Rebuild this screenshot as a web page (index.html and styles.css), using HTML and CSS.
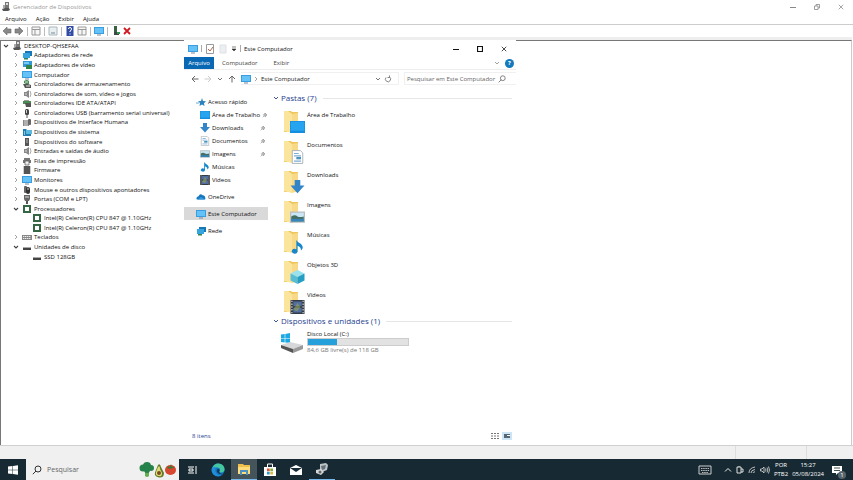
FILE: index.html
```html
<!DOCTYPE html>
<html lang="pt-BR">
<head>
<meta charset="utf-8">
<title>Gerenciador de Dispositivos</title>
<link rel="stylesheet" href="styles.css">
</head>
<body>
<svg class="defs" aria-hidden="true">
  <symbol id="chev" viewBox="0 0 8 8"><path d="M3 2 5 4 3 6" fill="none" stroke="#999" stroke-width=".9"/></symbol>
  <symbol id="open" viewBox="0 0 8 8"><path d="M2 3l2 2 2-2" fill="none" stroke="#444" stroke-width="1.100"/></symbol>
  <symbol id="pcdev" viewBox="0 0 10 10"><path d="M4 0h4v6H4z" fill="#777"/><path d="M5 1h2v2H5z" fill="#ddd"/><path d="m1 7 3-1h4l1 2-2 1H2z" fill="#555"/><path d="M2 3h2v3H2z" fill="#aaa"/></symbol>
  <symbol id="net" viewBox="0 0 10 10"><path d="M3 1h7v5H3z" fill="#1976b5"/><path d="M1 3h7v5H1z" fill="#35a5df"/><path d="M2 8h4v1.500H2z" fill="#387e55"/></symbol>
  <symbol id="video" viewBox="0 0 10 10"><path d="M1 1h9v6H1z" fill="#3197d5"/><path d="M4 5h6v4H4z" fill="#338447"/><path d="M2 2h5v2H2z" fill="#75cbf2"/></symbol>
  <symbol id="mon" viewBox="0 0 10 10"><path d="M0 1h10v7H0z" fill="#3a9de0"/><path d="M1 2h8v5H1z" fill="#65c2f7"/><path d="M3 9h4" stroke="#789" stroke-width="1"/></symbol>
  <symbol id="stor" viewBox="0 0 10 10"><path d="M2 2q3-2 5 0v3H4l-2-1z" fill="#478d54"/><path d="M1 5h5l3 1v3H3z" fill="#555"/><path d="M3 3h3M4 7h4" stroke="#ddd"/></symbol>
  <symbol id="snd" viewBox="0 0 10 10"><path d="M2 3h2l3-2v8L4 7H2z" fill="#888"/><path d="M8 2q2 3 0 6" fill="none" stroke="#aaa"/><path d="M4 4v2" stroke="#ddd"/></symbol>
  <symbol id="ide" viewBox="0 0 10 10"><path d="M1 3h8v3H1z" fill="#4b8c55"/><path d="M3 5h6v4H4z" fill="#555"/><path d="M2 2h5v1H2z" fill="#999"/></symbol>
  <symbol id="usb" viewBox="0 0 10 10"><rect x="3" y="1" width="4" height="6" rx="1.500" fill="#444"/><path d="M5 6v4" stroke="#555"/><path d="M4 2h1v3H4z" fill="#ccc"/></symbol>
  <symbol id="hid" viewBox="0 0 10 10"><path d="M1 3h6v6H1z" fill="#888"/><path d="M2 4h4M2 6h4M2 8h4" stroke="#eee" stroke-width=".8"/><rect x="6" y="2" width="3" height="6" rx="1" fill="#666"/></symbol>
  <symbol id="sys" viewBox="0 0 10 10"><path d="M1 2h3l1 1h4v6H1z" fill="#247daf"/><path d="M4 3h6v4H4z" fill="#59b9df"/><path d="M2 4h1v4H2z" fill="#7dc8ed"/></symbol>
  <symbol id="soft" viewBox="0 0 10 10"><rect x="3" y="1" width="4" height="8" fill="#555"/><path d="M4 3h2M4 5h2" stroke="#ccc" stroke-width=".8"/></symbol>
  <symbol id="prn" viewBox="0 0 10 10"><path d="M2 2h6v2H2zM1 4h8v3H1z" fill="#777"/><path d="M3 5h4v4H3z" fill="#eee" stroke="#555" stroke-width=".7"/></symbol>
  <symbol id="firm" viewBox="0 0 10 10"><path d="M2 1h6v8H2z" fill="#444"/><path d="M1 2h8M1 4h8M1 6h8M1 8h8" stroke="#777" stroke-width=".7"/></symbol>
  <symbol id="mouse" viewBox="0 0 10 10"><rect x="2" y="1" width="3" height="7" rx="1" fill="#666"/><rect x="4" y="2" width="4" height="7" rx="2" fill="#333"/><path d="M6 3v2" stroke="#ccc"/></symbol>
  <symbol id="port" viewBox="0 0 10 10"><path d="M2 1h6v4L7 7H3L2 5z" fill="#666"/><path d="M3 3h4" stroke="#ddd"/><path d="M5 7v3" stroke="#555" stroke-width="2"/></symbol>
  <symbol id="cpu" viewBox="0 0 10 10"><path d="M1 1h8v8H1z" fill="#356744"/><path d="M3 3h4v4H3z" fill="#fff"/></symbol>
  <symbol id="kbd" viewBox="0 0 10 10"><path d="M0 3h10v5H0z" fill="#888"/><path d="M1 4.500h8M1 6.500h8" stroke="#eee" stroke-dasharray="1.400 .6"/></symbol>
  <symbol id="disk" viewBox="0 0 10 10"><path d="M2 5h6l1 1v2H1V6z" fill="#444"/><path d="M2 5h6l1 1H1z" fill="#aaa"/></symbol>
  <symbol id="pin" viewBox="0 0 6 6"><path d="m3 1 2 2-1 .4L3.500 5 1.400 2.800 2.700 2zM2 4 .7 5.300" fill="#bbb" stroke="#8a8a8a" stroke-width=".6"/></symbol>
  <symbol id="star" viewBox="0 0 10 10"><path d="m6 1 1 3 3 .2-2 2L8.500 9 6 7.500 3.500 9 4 6 2 4.200 5 4z" fill="#2d82bd"/><path d="M0 6h3" stroke="#61acd7"/></symbol>
  <symbol id="desk" viewBox="0 0 10 8"><path d="M0 0h10v8H0z" fill="#168ee0"/><path d="M.5.500h9v6h-9z" fill="#27a4ef"/></symbol>
  <symbol id="down" viewBox="0 0 10 10"><path d="M3 0h4v4h3L5 9.500 0 4h3z" fill="#3285c8"/></symbol>
  <symbol id="doc" viewBox="0 0 10 12"><path d="M.5.500h7l2 2v9h-9z" fill="#fff" stroke="#a8b0b5" stroke-width=".8"/><path d="M2 3h4M2 5h6M2 9.500h6" stroke="#7eaed2"/><path d="M4 6h4v2H4z" fill="#4c92bf"/></symbol>
  <symbol id="pic" viewBox="0 0 12 9"><path d="M.5.500h11v8H.5z" fill="#c8e6f5" stroke="#b9bec2"/><path d="M1 4q3-2 5 0 2 1 5 0v4H1z" fill="#456f63"/><path d="M1 6h10v2H1z" fill="#3585bc"/></symbol>
  <symbol id="note" viewBox="0 0 10 12"><path d="M4 0q1 2 4 3.500 3 3 0 5.500 0-3-3-4v5a2.500 2 0 1 1-1-2z" fill="#1687ce"/></symbol>
  <symbol id="film" viewBox="0 0 10 10"><path d="M0 0h10v10H0z" fill="#333b45"/><path d="M2 1h6v3.500H2zM2 5.500h6V9H2z" fill="#526ea0"/><path d="M2 7 5 2l2 3-2 3z" fill="#96a650" opacity=".6"/><path d="M1 .5v9M9 .5v9" stroke="#ddd" stroke-width=".8" stroke-dasharray="1"/></symbol>
  <symbol id="cloud" viewBox="0 0 12 8"><path d="M1 7Q-.5 4 3 3q2-4 5-1 3 0 3 3 1 2-1 2z" fill="#1677bf"/><path d="M2 7 6 4l5 3z" fill="#359be0"/></symbol>
  <symbol id="cube" viewBox="0 0 12 12"><path d="m6 0 6 3-6 3-6-3z" fill="#99e2ee"/><path d="m0 3 6 3v6L0 9z" fill="#57bdd6"/><path d="m12 3-6 3v6l6-3z" fill="#259ec3"/></symbol>
  <symbol id="folder" viewBox="0 0 22 24"><path d="M1 1h7l1 1h6v20H1z" fill="#eec65d"/><path d="M1 1h4l4 3v19l-8-2z" fill="#fbe49b"/><path d="m9 4 6-1v18l-6 2z" fill="#f8d987"/></symbol>
  <symbol id="search" viewBox="0 0 10 10"><circle cx="6" cy="4" r="3" fill="none" stroke="currentColor"/><path d="M4 6 .8 9.200" stroke="currentColor"/></symbol>
  <symbol id="arrow" viewBox="0 0 8 8"><path d="M7.500 4H1M4 1 1 4l3 3" fill="none" stroke="currentColor"/></symbol>
  <symbol id="down-s" viewBox="0 0 6 6"><path d="m1 2 2 2 2-2" fill="none" stroke="currentColor" stroke-width=".9"/></symbol>
  <symbol id="x" viewBox="0 0 8 8"><path d="m1 1 6 6M7 1 1 7" stroke="currentColor"/></symbol>
</svg>
<div class="screen">
  <main class="manager">
    <header class="titlebar">
      <svg class="i10"><use href="#pcdev"/></svg><h1>Gerenciador de Dispositivos</h1>
      <div class="controls">
        <button aria-label="Minimizar"><svg class="i6" viewBox="0 0 6 6"><path d="M0 3.500h6" stroke="currentColor"/></svg></button>
        <button aria-label="Restaurar"><svg class="i6" viewBox="0 0 6 6"><path d="M.5 2h3.500v3.500H.5zM2 2V.5h3.500V4H4" fill="none" stroke="currentColor" stroke-width=".8"/></svg></button>
        <button aria-label="Fechar"><svg class="i6"><use href="#x"/></svg></button>
      </div>
    </header>
    <nav class="menu"><button>Arquivo</button><button>Ação</button><button>Exibir</button><button>Ajuda</button></nav>
    <div class="tools">
      <button aria-label="Voltar"><svg class="i10" viewBox="0 0 10 10"><path d="M1 5 5 1v2h4v4H5v2z" fill="#888" stroke="#666" stroke-width=".6"/></svg></button>
      <button aria-label="Avançar"><svg class="i10" viewBox="0 0 10 10"><path d="M9 5 5 1v2H1v4h4v2z" fill="#888" stroke="#666" stroke-width=".6"/></svg></button>
      <i></i>
      <button aria-label="Árvore"><svg class="i10" viewBox="0 0 10 10"><path d="M1 1h8v8H1zM4 4v5M1 3.500h8" fill="#f6f6f6" stroke="#999"/></svg></button>
      <i></i>
      <button aria-label="Propriedades"><svg class="i10" viewBox="0 0 10 10"><path d="M1 1h8v8H1z" fill="#e9eef1" stroke="#a9b8c0"/><path d="M3 7h4" stroke="#789"/></svg></button>
      <i></i>
      <button aria-label="Ajuda"><svg class="i10" viewBox="0 0 10 10"><path d="M1.500 0h7v10h-7z" fill="#2f4ba4"/><path d="M3.500 3q0-1.500 1.500-1.500T6.500 3 5 5v1M5 7.500v1" fill="none" stroke="#fff"/></svg></button>
      <button aria-label="Ações"><svg class="i10" viewBox="0 0 10 10"><path d="M1 1h8v8H1zM5 4v5M1 3.500h8" fill="#f6f6f6" stroke="#999"/></svg></button>
      <i></i>
      <button aria-label="Examinar"><svg class="i10"><use href="#mon"/></svg></button>
      <i></i>
      <button aria-label="Habilitar"><svg class="i10" viewBox="0 0 10 10"><path d="M3 0h3v6H3z" fill="#386044"/><path d="M3 6h5v3H3z" fill="#444"/><path d="M6 6h3v2H6z" fill="#2c9553"/></svg></button>
      <button aria-label="Desinstalar" class="remove"><svg class="i8" viewBox="0 0 8 8"><path d="m1 1 6 6M7 1 1 7" stroke="currentColor" stroke-width="1.800"/></svg></button>
    </div>
    <section class="pane" aria-label="Dispositivos">
      <ul class="tree">
        <li class="root"><svg class="i8"><use href="#open"/></svg><svg class="i10"><use href="#pcdev"/></svg>DESKTOP-QHSEFAA</li>
        <li><svg class="i8"><use href="#chev"/></svg><svg class="i10"><use href="#net"/></svg>Adaptadores de rede</li>
        <li><svg class="i8"><use href="#chev"/></svg><svg class="i10"><use href="#video"/></svg>Adaptadores de vídeo</li>
        <li><svg class="i8"><use href="#chev"/></svg><svg class="i10"><use href="#mon"/></svg>Computador</li>
        <li><svg class="i8"><use href="#chev"/></svg><svg class="i10"><use href="#stor"/></svg>Controladores de armazenamento</li>
        <li><svg class="i8"><use href="#chev"/></svg><svg class="i10"><use href="#snd"/></svg>Controladores de som, vídeo e jogos</li>
        <li><svg class="i8"><use href="#chev"/></svg><svg class="i10"><use href="#ide"/></svg>Controladores IDE ATA/ATAPI</li>
        <li><svg class="i8"><use href="#chev"/></svg><svg class="i10"><use href="#usb"/></svg>Controladores USB (barramento serial universal)</li>
        <li><svg class="i8"><use href="#chev"/></svg><svg class="i10"><use href="#hid"/></svg>Dispositivos de Interface Humana</li>
        <li><svg class="i8"><use href="#chev"/></svg><svg class="i10"><use href="#sys"/></svg>Dispositivos de sistema</li>
        <li><svg class="i8"><use href="#chev"/></svg><svg class="i10"><use href="#soft"/></svg>Dispositivos do software</li>
        <li><svg class="i8"><use href="#chev"/></svg><svg class="i10"><use href="#snd"/></svg>Entradas e saídas de áudio</li>
        <li><svg class="i8"><use href="#chev"/></svg><svg class="i10"><use href="#prn"/></svg>Filas de impressão</li>
        <li><svg class="i8"><use href="#chev"/></svg><svg class="i10"><use href="#firm"/></svg>Firmware</li>
        <li><svg class="i8"><use href="#chev"/></svg><svg class="i10"><use href="#mon"/></svg>Monitores</li>
        <li><svg class="i8"><use href="#chev"/></svg><svg class="i10"><use href="#mouse"/></svg>Mouse e outros dispositivos apontadores</li>
        <li><svg class="i8"><use href="#chev"/></svg><svg class="i10"><use href="#port"/></svg>Portas (COM e LPT)</li>
        <li><svg class="i8"><use href="#open"/></svg><svg class="i10"><use href="#cpu"/></svg>Processadores</li>
        <li class="leaf"><svg class="i10"><use href="#cpu"/></svg>Intel(R) Celeron(R) CPU 847 @ 1.10GHz</li>
        <li class="leaf"><svg class="i10"><use href="#cpu"/></svg>Intel(R) Celeron(R) CPU 847 @ 1.10GHz</li>
        <li><svg class="i8"><use href="#chev"/></svg><svg class="i10"><use href="#kbd"/></svg>Teclados</li>
        <li><svg class="i8"><use href="#open"/></svg><svg class="i10"><use href="#disk"/></svg>Unidades de disco</li>
        <li class="leaf"><svg class="i10"><use href="#disk"/></svg>SSD 128GB</li>
      </ul>
    </section>
    <footer class="status"><span></span><span></span></footer>

    <section class="explorer" aria-label="Este Computador">
      <header class="ex-title">
        <svg class="i10"><use href="#mon"/></svg><i></i>
        <svg class="i10" viewBox="0 0 10 10"><path d="M1.500.500h7v9h-7z" fill="#fff" stroke="#999"/><path d="m3 5 2 2 3-4" fill="none" stroke="#b7613e"/></svg>
        <svg class="i10" viewBox="0 0 10 10"><path d="M2 1h6v8H2z" fill="#eceff2" stroke="#dde1e5"/></svg>
        <svg class="i6" viewBox="0 0 6 6"><path d="M1 1h4M1 3h4L3 5z" fill="#333" stroke="#333" stroke-width=".6"/></svg><i></i>
        <h2>Este Computador</h2>
        <div class="ex-controls">
          <button aria-label="Minimizar"><svg class="i6" viewBox="0 0 6 6"><path d="M0 3.500h6" stroke="currentColor"/></svg></button>
          <button aria-label="Maximizar"><svg class="i6" viewBox="0 0 6 6"><path d="M.5.500h5v5h-5z" fill="none" stroke="currentColor" stroke-width="1.200"/></svg></button>
          <button aria-label="Fechar"><svg class="i6"><use href="#x"/></svg></button>
        </div>
      </header>
      <nav class="tabs"><button class="active">Arquivo</button><button>Computador</button><button>Exibir</button>
        <span class="help"><svg class="i6"><use href="#down-s"/></svg><button aria-label="Ajuda">?</button></span></nav>
      <div class="address">
        <button aria-label="Voltar"><svg class="i8"><use href="#arrow"/></svg></button>
        <button aria-label="Avançar" class="off"><svg class="i8 flip"><use href="#arrow"/></svg></button>
        <button aria-label="Recentes"><svg class="i6"><use href="#down-s"/></svg></button>
        <button aria-label="Acima"><svg class="i8 up"><use href="#arrow"/></svg></button>
        <div class="path"><svg class="i10"><use href="#mon"/></svg><svg class="i8"><use href="#chev"/></svg><span>Este Computador</span><svg class="i6 end"><use href="#down-s"/></svg><svg class="i8" viewBox="0 0 8 8"><path d="M2 2.500a2.600 2.600 0 1 0 3.500-.5M5.500.5V2.500h-2" fill="none" stroke="currentColor" stroke-width=".8"/></svg></div>
        <label class="find"><input type="text" placeholder="Pesquisar em Este Computador" aria-label="Pesquisar em Este Computador"><svg class="i8"><use href="#search"/></svg></label>
      </div>
      <div class="ex-body">
        <nav class="side">
          <a href="#" class="quick"><svg class="i10"><use href="#star"/></svg>Acesso rápido</a>
          <a href="#" class="sub"><svg class="i10"><use href="#desk"/></svg>Área de Trabalho<svg class="i6 pin"><use href="#pin"/></svg></a>
          <a href="#" class="sub"><svg class="i10"><use href="#down"/></svg>Downloads<svg class="i6 pin"><use href="#pin"/></svg></a>
          <a href="#" class="sub"><svg class="i10"><use href="#doc"/></svg>Documentos<svg class="i6 pin"><use href="#pin"/></svg></a>
          <a href="#" class="sub"><svg class="i10"><use href="#pic"/></svg>Imagens<svg class="i6 pin"><use href="#pin"/></svg></a>
          <a href="#" class="sub"><svg class="i10"><use href="#note"/></svg>Músicas</a>
          <a href="#" class="sub"><svg class="i10"><use href="#film"/></svg>Vídeos</a>
          <a href="#" class="top"><svg class="i10"><use href="#cloud"/></svg>OneDrive</a>
          <a href="#" class="top sel"><svg class="i10"><use href="#mon"/></svg>Este Computador</a>
          <a href="#" class="top"><svg class="i10"><use href="#net"/></svg>Rede</a>
        </nav>
        <div class="content">
          <h3><svg class="i6"><use href="#down-s"/></svg>Pastas (7)</h3>
          <ul class="folders">
            <li><span class="fold"><svg><use href="#folder"/></svg><svg class="badge"><use href="#desk"/></svg></span>Área de Trabalho</li>
            <li><span class="fold"><svg><use href="#folder"/></svg><svg class="badge"><use href="#doc"/></svg></span>Documentos</li>
            <li><span class="fold"><svg><use href="#folder"/></svg><svg class="badge"><use href="#down"/></svg></span>Downloads</li>
            <li><span class="fold"><svg><use href="#folder"/></svg><svg class="badge"><use href="#pic"/></svg></span>Imagens</li>
            <li><span class="fold"><svg><use href="#folder"/></svg><svg class="badge"><use href="#note"/></svg></span>Músicas</li>
            <li><span class="fold"><svg><use href="#folder"/></svg><svg class="badge"><use href="#cube"/></svg></span>Objetos 3D</li>
            <li><span class="fold"><svg><use href="#folder"/></svg><svg class="badge"><use href="#film"/></svg></span>Vídeos</li>
          </ul>
          <h3><svg class="i6"><use href="#down-s"/></svg>Dispositivos e unidades (1)</h3>
          <div class="drive">
            <svg class="hdd" viewBox="0 0 24 22"><path d="M1 3.500 4.700 3v4H1zM5.300 3 10 2v5H5.300zM1 7.600h3.700v4L1 11zM5.300 7.600H10V12l-4.700-.4z" fill="#1ba9e5"/><path d="m1 14 9-3 13 3-10 4z" fill="#d5d7d8"/><path d="m1 14 12 4v4L1 17z" fill="#555"/><path d="m13 18 10-4v4l-10 4z" fill="#999"/></svg>
            <div class="info"><span>Disco Local (C:)</span><div class="bar"><div></div></div><small>84,6 GB livre(s) de 118 GB</small></div>
          </div>
        </div>
      </div>
      <footer class="ex-foot"><span>8 itens</span>
        <svg class="i10" viewBox="0 0 10 10"><path d="M1 2.500h8M1 5h8M1 7.500h8" stroke="#777" stroke-dasharray="2 1"/></svg>
        <svg class="i10" viewBox="0 0 10 10"><path d="M0 1h10v8H0z" fill="#cde4f5"/><path d="M2 3h6v4H2z" fill="#567"/><path d="M5 4h3v1H5z" fill="#fff"/></svg>
      </footer>
    </section>
  </main>

  <footer class="taskbar">
    <button class="start" aria-label="Iniciar"><svg class="i10" viewBox="0 0 10 10"><path d="M0 1.500 4.500 1v3.700H0zM5 1l5-.8v4.500H5zM0 5.200h4.500V9L0 8.500zM5 5.200h5v4.500L5 9z" fill="#fff"/></svg></button>
    <label class="search"><svg class="i10"><use href="#search"/></svg><input type="text" placeholder="Pesquisar" aria-label="Pesquisar">
      <svg class="food" viewBox="0 0 38 16"><path d="M6 7h4v7q-2 2-4 0z" fill="#66ae53"/><g fill="#27814b"><circle cx="4" cy="6" r="3.500"/><circle cx="8" cy="4" r="4"/><circle cx="12" cy="6" r="3"/><circle cx="8" cy="8" r="3"/></g><path d="M19 3q2-2 3 2l3 6q0 5-5 4.500-5-1-4-5z" fill="#617b28"/><path d="M19 5q2-2 2 2l2 4q0 4-3 3-4 0-3-4z" fill="#e2dc77"/><circle cx="20" cy="11" r="2" fill="#794b23"/><ellipse cx="31.500" cy="8" rx="5.500" ry="5" fill="#d7462f"/><path d="m28 4 3 1 1-3 1 3 3-.5-3 2-4 0z" fill="#377a37"/></svg></label>
    <button aria-label="Visão de Tarefas"><svg class="i10" viewBox="0 0 10 10"><path d="M1 2h6M1 8h6M2 4h4v2H2zM9 1v8" fill="none" stroke="#fff"/></svg></button>
    <button aria-label="Edge"><svg class="i14" viewBox="0 0 14 14"><circle cx="7" cy="7" r="6.500" fill="#1475c5"/><path d="M1 6Q3 0 8 .6q6 1 5.500 7-2 3-5 1.500 2-4-2-4.600Q2 4 1 6z" fill="#44c6a0"/><path d="M1 6q1-3 5-1.500Q3 6 5 10q2 3 6 2Q6 15 2 11 0 8 1 6z" fill="#218edb"/><path d="M8 9q1-2 0-3-3 0-2 3 2 3 6 2-3 0-4-2z" fill="#103951"/></svg></button>
    <button class="cur" aria-label="Explorador de Arquivos"><svg class="i14" viewBox="0 0 14 14"><path d="M1 2h5l1 1h6v9H1z" fill="#efbf4c"/><path d="M1 5h12v7H1z" fill="#ffdc7a"/><path d="M3 8h8v5H9v-3H5v3H3z" fill="#4e91c0"/></svg></button>
    <button aria-label="Microsoft Store"><svg class="i14" viewBox="0 0 14 14"><path d="M1 4h12v9H1z" fill="#fff"/><path d="M4.500 4V1h5v3" fill="none" stroke="#fff"/><path d="M4 5.500h2.700v2.700H4z" fill="#e05237"/><path d="M7.300 5.500H10v2.700H7.300z" fill="#79b33d"/><path d="M4 8.800h2.700v2.700H4z" fill="#269cd6"/><path d="M7.300 8.800H10v2.700H7.300z" fill="#e6b535"/></svg></button>
    <button aria-label="Email"><svg class="i14" viewBox="0 0 14 14"><path d="m1 5 6-3 6 3v7H1z" fill="#fff"/><path d="m1 5 6 4 6-4z" fill="#172a33"/></svg></button>
    <button class="run" aria-label="Gerenciador de Dispositivos"><svg class="i14" viewBox="0 0 14 14"><path d="m5 2 6-1 2 2-1 5-5 2-2-2z" fill="#bfc4c6"/><path d="m6 4 5-1-1 4-3 1z" fill="#64717a"/><path d="m1 8 5-1 3 3-3 3-5-2z" fill="#d5d8d9"/><circle cx="5" cy="10" r="1.500" fill="#666"/></svg></button>
    <div class="tray">
      <svg class="i14" viewBox="0 0 14 14"><path d="M1 3h12v8H1z" fill="none" stroke="#ccc"/><path d="M3 5.500h8M3 7.500h8M4 9.500h6" stroke="#bbb" stroke-dasharray="1.500 .7"/></svg>
      <svg class="i8 chevup" viewBox="0 0 8 8"><path d="m1 5.500 3-3 3 3" fill="none" stroke="#eee"/></svg>
      <svg class="i8" viewBox="0 0 8 8"><path d="M1 1h4v6H1zM5 3h2v3H5M2 0h2" fill="none" stroke="#ddd"/></svg>
      <svg class="i8" viewBox="0 0 8 8"><path d="M1 7q0-5 6-6M3 7q0-3 4-3.500M5 7q0-1 2-1.200" fill="none" stroke="#bbb"/></svg>
      <svg class="i10" viewBox="0 0 10 10"><path d="M.5 4h1.500l2-2v6L2 6H.5zM5.500 3.500q1 1.500 0 3M7 2.500q1.700 2.500 0 5M8.500 1.500q2 3.500 0 7" fill="none" stroke="#ddd" stroke-width=".8"/></svg>
      <span>POR<br>PTB2</span><time>15:27<br>05/08/2024</time>
      <span class="msg"><svg class="i10" viewBox="0 0 10 10"><path d="M0 1h10v7H6L4 10V8H0z" fill="#fff"/><path d="M2 3h6M2 5.500h6" stroke="#455"/></svg><b>1</b></span>
    </div>
  </footer>
</div>
</body>
</html>
```
FILE: styles.css
```css
* { box-sizing: border-box; }
body { margin: 0; font: 6px/10px "Open Sans", "Noto Sans", sans-serif; color: #111; background: #f0f0f0; }
h1, h2, h3, ul { margin: 0; padding: 0; font-size: inherit; font-weight: 400; list-style: none; }
button, input { font: inherit; color: inherit; background: none; border: 0; padding: 0; margin: 0; }
button { display: flex; align-items: center; justify-content: center; }
a { color: inherit; text-decoration: none; }
svg { flex: none; display: block; }
.defs { position: absolute; width: 0; height: 0; }
.i6 { width: 6px; height: 6px; }
.i8 { width: 8px; height: 8px; }
.i10 { width: 10px; height: 10px; }
.i14 { width: 14px; height: 14px; }

.screen { display: flex; flex-direction: column; height: 100vh; }
.manager { position: relative; flex: 1; display: flex; flex-direction: column; min-height: 0; background: #fff; }
.titlebar { flex: none; display: flex; align-items: center; height: 13px; padding-left: 1px; gap: 2px; color: #999; }
.controls { display: flex; margin-left: auto; color: #888; }
.controls button { width: 24px; }
.menu { flex: none; display: flex; height: 11px; gap: 9px; padding-left: 5px; }
.tools { flex: none; display: flex; align-items: center; height: 13px; gap: 2px; margin-bottom: 3px; padding-left: 2px; border-top: 1px solid #ccc; }
.tools i { width: 1px; height: 9px; background: #bbb; margin: 0 1px; }
.remove { color: #d01820; }
.pane { flex: 1; min-height: 0; display: grid; grid-template-rows: minmax(0, 6fr) minmax(0, 5fr); margin-right: 1px; border-top: 1px solid #777; border-left: 1px solid #777; border-right: 1px solid #ccc; box-shadow: 0 -3px #eee; }
.tree { display: grid; grid-auto-rows: minmax(0, 1fr); }
.tree li { display: flex; align-items: center; gap: 2px; padding-left: 11px; white-space: nowrap; }
.tree .root { padding-left: 1px; }
.tree .leaf { padding-left: 31px; }
.status { flex: none; display: flex; justify-content: flex-end; height: 14px; background: #f0f0f0; border-top: 1px solid #d0d0d0; }
.status span { width: 71px; border-left: 1px solid #ddd; }
.status span:last-child { width: 47px; }

.explorer { position: absolute; left: 184px; top: 40px; bottom: 14px; width: 332px; display: flex; flex-direction: column; background: #fff; }
.ex-title { display: flex; align-items: center; height: 17px; padding-left: 4px; gap: 3px; }
.ex-title i { width: 1px; height: 7px; background: #aaa; }
.ex-controls { display: flex; margin-left: auto; }
.ex-controls button { width: 24px; }
.tabs { display: flex; align-items: stretch; height: 13px; border-bottom: 1px solid #eee; color: #444; }
.tabs > button { padding: 0 8px; }
.tabs > .active { width: 30px; padding: 0; background: #0868b4; color: #fff; }
.help { display: flex; align-items: center; gap: 5px; margin-left: auto; padding-right: 2px; color: #999; }
.help button { width: 9px; height: 9px; border-radius: 50%; background: #1379bd; color: #fff; font-weight: 700; }
.address { display: flex; align-items: center; height: 17px; padding-left: 7px; gap: 5px; color: #666; }
.off { color: #ccc; }
.flip { transform: rotate(180deg); }
.up { transform: rotate(90deg); }
.path { display: flex; align-items: center; flex: 1; height: 13px; gap: 1px; border: solid #f0f0f0; border-width: 1px 1px 1px 0; padding-right: 6px; }
.path span { color: #222; }
.end { margin-left: auto; margin-right: 2px; }
.find { display: flex; align-items: center; width: 112px; height: 13px; padding: 0 10px 0 2px; border: solid #f0f0f0; border-width: 1px 0 1px 1px; }
.find input { flex: 1; min-width: 0; }
input::placeholder { color: #666; opacity: 1; }
.ex-body { flex: 1; display: flex; padding-top: 5px; }
.side { width: 84px; }
.side a { display: flex; align-items: center; height: 13px; gap: 2px; white-space: nowrap; }
.side .quick { padding-left: 12px; margin-top: 3px; }
.side .sub { padding-left: 16px; }
.side .top { padding-left: 12px; margin-top: 4px; }
.side .sel { background: #d9d9d9; }
.pin { margin-left: auto; margin-right: 2px; }
.content { flex: 1; padding: 0 4px 0 5px; }
h3 { display: flex; align-items: center; gap: 2px; height: 12px; font-size: 8px; color: #27418f; }
h3::after { content: ""; flex: 1; height: 1px; margin-left: 4px; background: #e6e6e6; }
.folders { padding: 3px 0 0 10px; }
.folders li { display: flex; height: 30px; gap: 2px; padding-top: 3px; }
.folders li:last-child { height: 28px; }
.fold { position: relative; width: 22px; height: 24px; }
.fold svg { width: 22px; height: 24px; }
.fold .badge { position: absolute; right: 0; bottom: 0; width: 15px; height: 14px; }
.drive { display: flex; align-items: center; gap: 3px; padding: 3px 0 0 7px; }
.hdd { width: 24px; height: 22px; }
.info { display: flex; flex-direction: column; width: 102px; line-height: 8px; }
.bar { height: 8px; background: #e2e2e2; border: 1px solid #ccc; }
.bar div { width: 29%; height: 100%; background: #26a0da; }
.info small { font-size: inherit; color: #777; }
.ex-foot { display: flex; align-items: center; height: 18px; gap: 2px; padding: 0 4px 0 8px; color: #27418f; }
.ex-foot span { margin-right: auto; }

.taskbar { flex: none; display: flex; height: 21px; background: #172a33; color: #fff; }
.taskbar > button { width: 26px; }
.search { display: flex; align-items: center; gap: 5px; width: 153px; padding: 0 2px 0 6px; background: #f0f0f0; color: #333; }
.search input { flex: 1; min-width: 0; font-size: 7px; }
.food { width: 38px; height: 16px; }
.taskbar .cur { background: #45545b; border-bottom: 1px solid #76b9ed; }
.taskbar .run { border-bottom: 1px solid #76b9ed; }
.tray { display: flex; align-items: center; gap: 4px; margin-left: auto; padding-right: 11px; line-height: 9px; text-align: center; }
.chevup { margin-left: 8px; }
.msg { position: relative; margin-left: 4px; }
.msg b { position: absolute; right: -4px; bottom: -4px; width: 8px; height: 8px; border-radius: 50%; background: #56646b; line-height: 8px; font-weight: 400; }
```
